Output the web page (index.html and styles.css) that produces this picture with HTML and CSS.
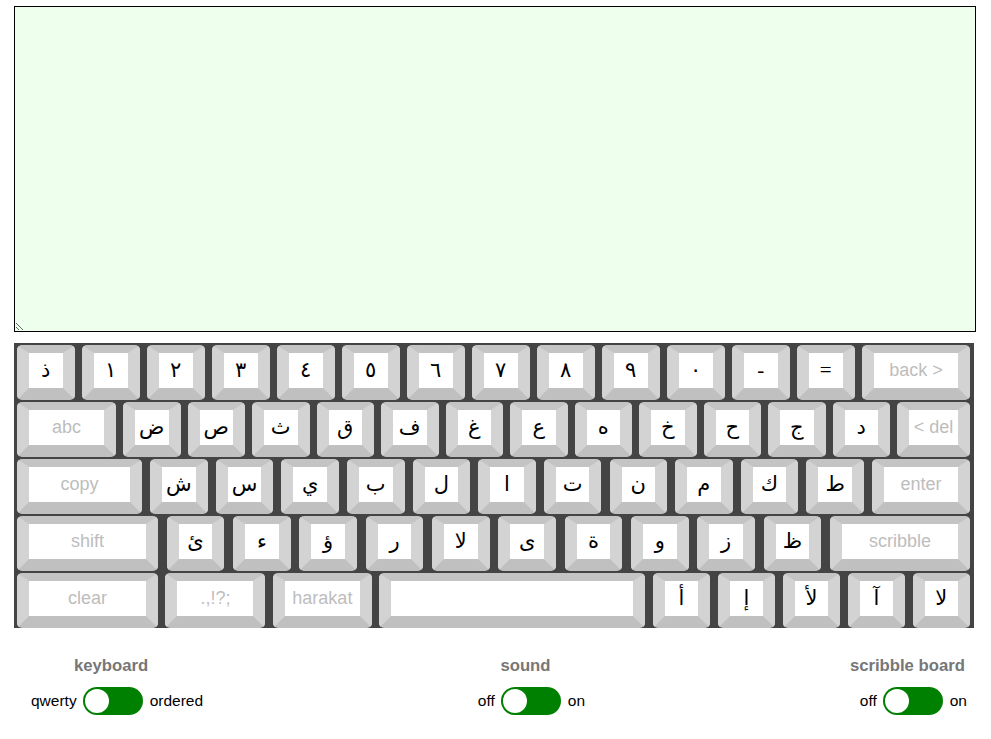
FILE: index.html
```html
<!DOCTYPE html>
<html lang="ar">
<head>
<meta charset="utf-8">
<title>Arabic Keyboard</title>
<link rel="stylesheet" href="styles.css">
</head>
<body>
<div class="page">
  <textarea class="editor" dir="rtl"></textarea>

  <div class="keyboard" dir="ltr">
    <div class="row">
      <div class="key ar">ذ</div>
      <div class="key ar">١</div>
      <div class="key ar">٢</div>
      <div class="key ar">٣</div>
      <div class="key ar">٤</div>
      <div class="key ar">٥</div>
      <div class="key ar">٦</div>
      <div class="key ar">٧</div>
      <div class="key ar">٨</div>
      <div class="key ar">٩</div>
      <div class="key ar">٠</div>
      <div class="key ar">-</div>
      <div class="key ar">=</div>
      <div class="key fn w-back">back &gt;</div>
    </div>
    <div class="row">
      <div class="key fn w-abc">abc</div>
      <div class="key ar">ض</div>
      <div class="key ar">ص</div>
      <div class="key ar">ث</div>
      <div class="key ar">ق</div>
      <div class="key ar">ف</div>
      <div class="key ar">غ</div>
      <div class="key ar">ع</div>
      <div class="key ar">ه</div>
      <div class="key ar">خ</div>
      <div class="key ar">ح</div>
      <div class="key ar">ج</div>
      <div class="key ar">د</div>
      <div class="key fn w-del">&lt; del</div>
    </div>
    <div class="row">
      <div class="key fn w-copy">copy</div>
      <div class="key ar">ش</div>
      <div class="key ar">س</div>
      <div class="key ar">ي</div>
      <div class="key ar">ب</div>
      <div class="key ar">ل</div>
      <div class="key ar">ا</div>
      <div class="key ar">ت</div>
      <div class="key ar">ن</div>
      <div class="key ar">م</div>
      <div class="key ar">ك</div>
      <div class="key ar">ط</div>
      <div class="key fn w-enter">enter</div>
    </div>
    <div class="row">
      <div class="key fn w-shift">shift</div>
      <div class="key ar">ئ</div>
      <div class="key ar">ء</div>
      <div class="key ar">ؤ</div>
      <div class="key ar">ر</div>
      <div class="key ar">لا</div>
      <div class="key ar">ى</div>
      <div class="key ar">ة</div>
      <div class="key ar">و</div>
      <div class="key ar">ز</div>
      <div class="key ar">ظ</div>
      <div class="key fn w-scribble">scribble</div>
    </div>
    <div class="row">
      <div class="key fn w-clear">clear</div>
      <div class="key fn w-punct">.,!?;</div>
      <div class="key fn w-harakat">harakat</div>
      <div class="key fn w-space"></div>
      <div class="key ar">أ</div>
      <div class="key ar">إ</div>
      <div class="key ar">لأ</div>
      <div class="key ar">آ</div>
      <div class="key ar">لا</div>
    </div>
  </div>

  <div class="controls">
    <div class="control">
      <div class="control-title">keyboard</div>
      <div class="toggle-row">
        <span>qwerty</span>
        <span class="switch"><span class="knob"></span></span>
        <span>ordered</span>
      </div>
    </div>
    <div class="control">
      <div class="control-title">sound</div>
      <div class="toggle-row">
        <span>off</span>
        <span class="switch"><span class="knob"></span></span>
        <span>on</span>
      </div>
    </div>
    <div class="control">
      <div class="control-title">scribble board</div>
      <div class="toggle-row">
        <span>off</span>
        <span class="switch"><span class="knob"></span></span>
        <span>on</span>
      </div>
    </div>
  </div>
</div>
</body>
</html>
```

FILE: styles.css
```css
html, body {
  margin: 0;
  padding: 0;
  background: #ffffff;
}

body {
  font-family: "Liberation Sans", Arial, sans-serif;
  color: #000;
}

.page {
  padding: 6px 0 0 14px;
  width: 962px;
}

.editor {
  display: block;
  box-sizing: border-box;
  width: 962px;
  height: 326px;
  margin: 0;
  border: 1px solid #000;
  background: #eeffee;
  font-family: "DejaVu Sans", sans-serif;
  font-size: 20px;
  padding: 2px;
}

.keyboard {
  box-sizing: border-box;
  width: 960px;
  margin-top: 11px;
  padding: 2px 4px 0 3px;
  background: #444444;
}

.row {
  display: flex;
  justify-content: space-between;
  height: 55px;
  margin-bottom: 2px;
}

.row:last-child {
  margin-bottom: 0;
}

.key {
  box-sizing: border-box;
  flex: none;
  width: 57.5px;
  height: 55px;
  border-style: solid;
  border-width: 8px 12px 12px 12px;
  border-color: #c4c4c4 #d3d3d3 #c0c0c0 #d3d3d3;
  border-radius: 5px;
  background: #ffffff;
  display: flex;
  align-items: center;
  justify-content: center;
  overflow: hidden;
  white-space: nowrap;
}

.ar {
  font-family: "Liberation Serif", "DejaVu Sans", serif;
  font-size: 21px;
  color: #000;
}

.fn {
  font-family: "Liberation Sans", Arial, sans-serif;
  font-size: 18px;
  color: #bdbdbd;
}

.w-back { width: 108px; }
.w-abc { width: 99px; }
.w-del { width: 73px; }
.w-copy { width: 125px; }
.w-enter { width: 98px; }
.w-shift { width: 141px; }
.w-scribble { width: 140px; }
.w-clear { width: 141px; }
.w-punct { width: 100px; }
.w-harakat { width: 99px; }
.w-space { width: 266px; }

.controls {
  display: flex;
  justify-content: space-between;
  width: 960px;
  box-sizing: border-box;
  padding: 0 7px 0 5px;
  margin-top: 28px;
}

.control {
  display: flex;
  flex-direction: column;
  align-items: center;
}

.control-title {
  font-size: 16.7px;
  font-weight: bold;
  line-height: 20px;
  color: #777777;
  margin-bottom: 11px;
}

.toggle-row {
  display: flex;
  align-items: center;
  gap: 6.5px;
  padding-left: 12px;
  font-size: 15.5px;
  line-height: 28px;
}

.switch {
  position: relative;
  display: inline-block;
  width: 60px;
  height: 28px;
  border-radius: 14px;
  background: #008000;
}

.knob {
  position: absolute;
  left: 2px;
  top: 2px;
  width: 24px;
  height: 24px;
  border-radius: 50%;
  background: #ffffff;
}
```
